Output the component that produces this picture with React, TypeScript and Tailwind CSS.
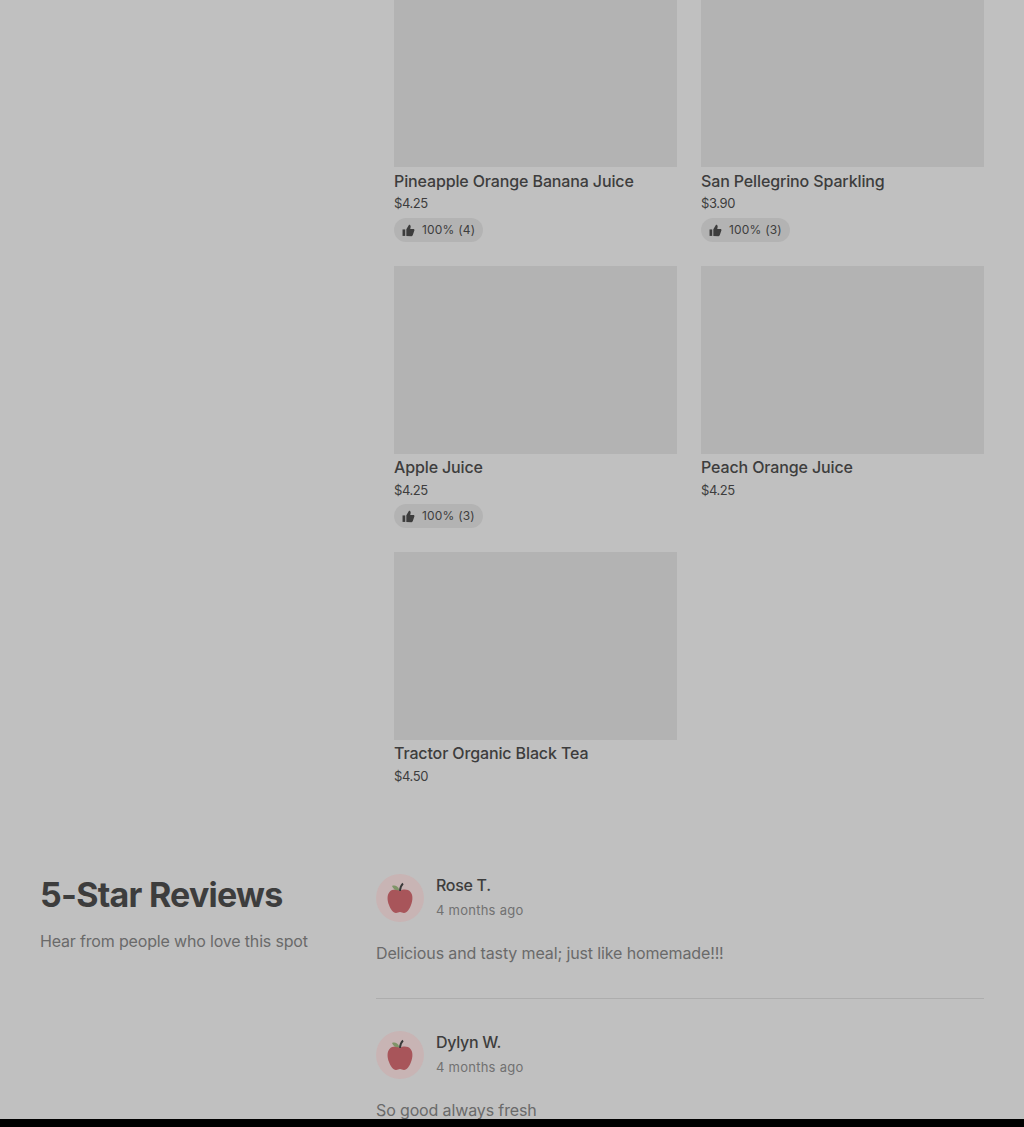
const font = "font-['Inter','Liberation_Sans',sans-serif]";

function Thumb() {
  return (
    <svg viewBox="0 0 24 24" className="w-[13px] h-[13px] fill-[#3d3d3d]">
      <path d="M1 10h5v12H1z" />
      <path d="M8 22V9.500l5-8c1.800 0 3 1.300 3 3 0 1-.3 2.500-.8 4.500H21c1.200 0 2 1 2 2.200 0 .3 0 .6-.2.9l-3 8.800c-.3.9-1.100 1.600-2.100 1.600z" />
    </svg>
  );
}

function Apple() {
  return (
    <svg viewBox="0 0 28 32" className="w-[28px] h-[32px]">
      <path d="M14 9c-3-2-8-2-10.500 1C1 13 1 18 3 23c1.500 4 4 8 7 8 1.500 0 2.500-1 4-1s2.500 1 4 1c3 0 5.500-4 7-8 2-5 2-10-.5-13C22 7 17 7 14 9z" fill="#a8555a" />
      <path d="M13.500 8C11.500 3.500 8.500 3 6 4c1.500 3.500 4 5 7.500 4z" fill="#7f9468" />
      <path d="M14 9c0-3 1-5.500 3-7.500" stroke="#3a3a3a" strokeWidth="1.800" fill="none" />
    </svg>
  );
}

function Card({ name, price, rating, first }: { name: string; price: string; rating?: string; first?: boolean }) {
  return (
    <div className="flex flex-col items-start">
      <div className={`w-full shrink-0 bg-[#b3b3b3] ${first ? "h-[167px]" : "h-[188px]"}`} />
      <div className={`${first ? "mt-[3px]" : "mt-[2px]"} text-[16px] leading-[22px] font-medium tracking-[-0.13px] text-[#3d3d3d]`}>{name}</div>
      <div className={`${first ? "mt-0" : "mt-[1px]"} text-[13px] leading-[22px] tracking-[-0.4px] text-[#3d3d3d]`}>{price}</div>
      {rating && (
        <div className={`${first ? "mt-[4px]" : "mt-[3px]"} h-6 flex items-center gap-[7px] pl-[8px] pr-[8px] rounded-full bg-[#b3b3b3] text-[12px] tracking-[0.2px] text-[#3d3d3d]`}>
          <Thumb />
          <span>{rating}</span>
        </div>
      )}
    </div>
  );
}

function Review({ name, text }: { name: string; text: string }) {
  return (
    <div>
      <div className="flex items-center gap-3">
        <div className="w-12 h-12 rounded-full bg-[#c8b4b4] flex items-center justify-center">
          <Apple />
        </div>
        <div className="-mt-[3px]">
          <div className="text-[16px] leading-[24px] font-medium tracking-[-0.3px] text-[#3d3d3d]">{name}</div>
          <div className="text-[13px] leading-[20px] tracking-[0.25px] text-[#717171] mt-[3px]">4 months ago</div>
        </div>
      </div>
      <div className="mt-[19px] text-[16px] leading-[24px] tracking-[-0.13px] text-[#6a6a6a]">{text}</div>
    </div>
  );
}

export default function App() {
  return (
    <div className={`h-[1127px] overflow-hidden bg-[#c0c0c0] flex flex-col ${font}`}>
      <div className="h-[1119px] overflow-hidden px-10">
        <div className="pl-[354px]">
          <div className="grid grid-cols-2 gap-x-6 gap-y-6 grid-rows-[242px_262px_auto]">
            <Card first name="Pineapple Orange Banana Juice" price="$4.25" rating="100% (4)" />
            <Card first name="San Pellegrino Sparkling" price="$3.90" rating="100% (3)" />
            <Card name="Apple Juice" price="$4.25" rating="100% (3)" />
            <Card name="Peach Orange Juice" price="$4.25" />
            <Card name="Tractor Organic Black Tea" price="$4.50" />
          </div>
        </div>
        <div className="mt-[88px] flex">
          <div className="w-[336px] shrink-0">
            <h2 className="-mt-px text-[34px] leading-[42px] font-bold tracking-[-0.75px] text-[#3d3d3d]">5-Star Reviews</h2>
            <p className="mt-[13px] text-[16px] leading-[24px] tracking-[-0.17px] text-[#6a6a6a]">Hear from people who love this spot</p>
          </div>
          <div className="flex-1 -mt-px">
            <Review name="Rose T." text="Delicious and tasty meal; just like homemade!!!" />
            <div className="mt-[33px] mb-[32px] border-t border-[#adadad]" />
            <Review name="Dylyn W." text="So good always fresh" />
          </div>
        </div>
      </div>
      <div className="h-2 bg-black" />
    </div>
  );
}
